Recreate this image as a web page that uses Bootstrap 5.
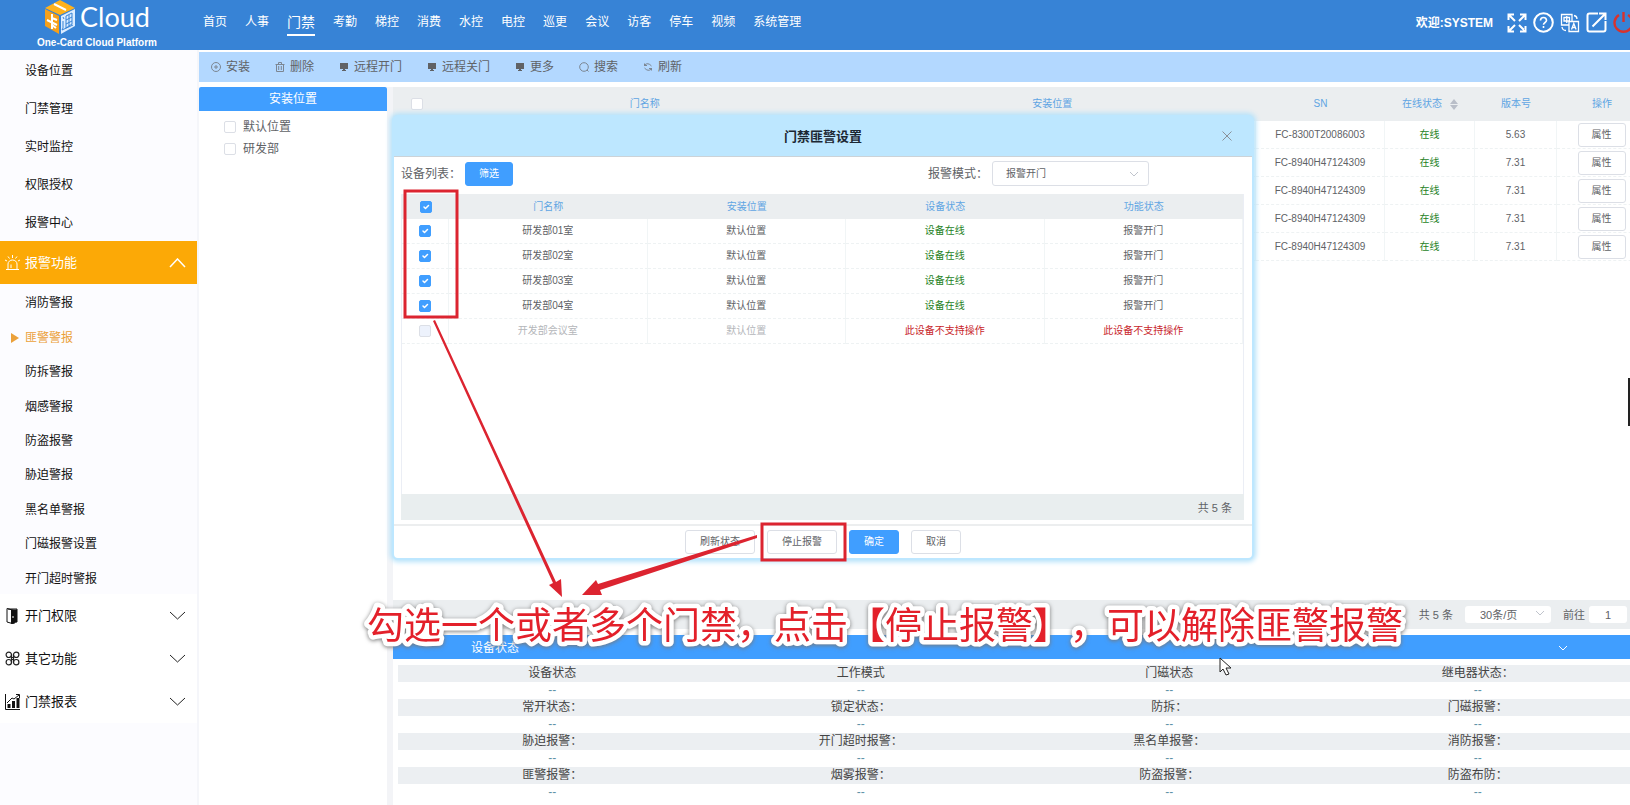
<!DOCTYPE html>
<html lang="zh-CN">
<head>
<meta charset="utf-8">
<meta name="viewport" content="width=device-width, initial-scale=1">
<title>One-Card Cloud Platform</title>
<link href="https://cdn.jsdelivr.net/npm/bootstrap@5.3.0/dist/css/bootstrap.min.css" rel="stylesheet">
<style>
  :root { --brand: #409eff; --ink: #606266; --band: #ebeef0; --line: #ebeef5; }
  body { font: 12px/16px "Liberation Sans", "Noto Sans CJK SC", sans-serif; color: var(--ink); background: #fff; overflow: hidden; }
  a { text-decoration: none; color: inherit; }
  svg { display: block; flex: none; }

  .topbar { height: 50px; background: #3783d6; color: #fff; overflow: hidden; }
  .brand { width: 194px; }
  .brand-word { font: 27px/34px Lato, sans-serif; }
  .brand-tag { font-size: 10px; line-height: 14px; font-weight: 700; }
  .topnav .nav-link { color: #fff; padding: 0 9px; line-height: 24px; }
  .topnav .active { font-size: 14px; }
  .topnav .active span { display: inline-block; border-bottom: 2px solid #fff; }
  .tools { gap: 6px; margin-right: -4px; }

  .sidebar { width: 199px; background: #fcfcff; border-right: 2px solid #f5f6fa; color: #111; }
  .side-link { display: flex; align-items: center; height: 38px; padding: 2px 0 0 25px; }
  .side-group { display: flex; align-items: center; height: 43px; width: 100%; border: 0; padding: 0 11px 0 5px; background: #fff; color: #111; font-size: 13px; text-align: left; }
  .side-group span { flex: 1; margin-left: 5px; }
  .side-group.open { background: #fca906; color: #fff; }
  .side-sub { display: grid; grid-auto-rows: 1fr; min-height: 310px; }
  .side-sub a { display: flex; align-items: center; padding: 4px 0 0 25px; }
  .side-sub a.current { color: #eba13a; padding-left: 11px; gap: 6px; }

  .toolbar { height: 30px; background: #b3d8ff; padding-left: 11px; gap: 24px; margin-top: 2px; }
  .toolbar button { border: 0; background: none; padding: 0; color: var(--ink); display: flex; align-items: center; gap: 4px; }

  .tree { width: 188px; }
  .tree h2 { height: 24px; line-height: 25px; font-size: 12px; font-weight: 400; margin: 0; background: var(--brand); color: #fff; text-align: center; border-radius: 2px 2px 0 0; }
  .tree label { display: flex; align-items: center; gap: 7px; height: 22px; padding-left: 25px; }
  .form-check-input[type=checkbox] { width: 12px; height: 12px; margin: 0; border: 1px solid #dcdfe6; border-radius: 2px; display: block; flex: none; }
  .form-check-input[type=checkbox]:checked { background-color: var(--brand); border-color: var(--brand); }
  .form-check-input[type=checkbox]:disabled { background-color: #edf2fc; opacity: 1; }
  .gutter { width: 6px; background: #f3f4f7; }

  .grid-table { table-layout: fixed; border-collapse: separate; border-spacing: 0; font-size: 10px; line-height: 14px; text-align: center; width: 100%; }
  .grid-table th { background: var(--band); color: #5fa5e3; font-weight: 400; padding: 0; }
  .grid-table td { padding: 0; border-right: 1px solid #f1f5f6; border-bottom: 1px dashed #eef2f3; }
  .grid-table .form-check-input[type=checkbox] { margin: 0 auto; }
  .grid-table .ok { color: #1d7f1d; }
  .grid-table .bad { color: #c8242a; }
  .grid-table .off { color: #b4b6ba; }
  .device-list { overflow: hidden; }
  .device-list .grid-table { width: calc(100% + 17px); }
  .device-list th { height: 34px; }
  .device-list td { height: 28px; padding-top: 1px; }
  .plain-btn, .solid-btn { height: 24px; font-size: 10px; line-height: 22px; padding: 0 13px; border-radius: 3px; border: 1px solid #dcdfe6; background: #fff; color: var(--ink); }
  .solid-btn { background: var(--brand); border-color: var(--brand); color: #fff; }

  .pick { appearance: none; border: 1px solid #dcdfe6; border-radius: 3px; color: var(--ink); background: #fff url("data:image/svg+xml,%3Csvg xmlns='http://www.w3.org/2000/svg' width='10' height='6'%3E%3Cpath d='M1 1l4 4 4-4' fill='none' stroke='%23c0c4cc'/%3E%3C/svg%3E") no-repeat right 9px center; }
  .pager { height: 29px; background: var(--band); font-size: 11px; padding-right: 3px; }
  .pager .pick { width: 86px; height: 17px; margin: 0 12px; border: 0; padding: 0 15px; font-size: 11px; background-position: right 6px top 4px; }
  .pager input { width: 38px; height: 17px; border: 0; border-radius: 3px; text-align: center; font-size: 11px; color: var(--ink); padding: 0; }
  .status-bar { height: 24px; background: var(--brand); color: #fff; margin-top: 6px; padding: 2px 62px 0 78px; }
  .status-table { table-layout: fixed; width: 100%; text-align: center; color: #444; line-height: 17px; }
  .status-table th { font-weight: 400; padding: 0; background: #eceff2; }
  .status-table td { padding: 0; color: #5f93a8; }
  .status-wrap { padding: 6px 0 4px 5px; margin-right: -2px; }

  .dialog-box { position: absolute; left: -1px; right: 376px; top: 28px; background: #fff; border: 2px solid #bde7ff; border-radius: 6px; box-shadow: 0 0 5px 2px #b5e2fa; }
  .dialog-head { height: 40px; background: #bde7ff; border-bottom: 1px solid #ccd3d8; position: relative; }
  .dialog-head h1 { font-size: 13px; line-height: 40px; font-weight: 700; margin: 0; color: #1c2733; text-align: center; }
  .dialog-head button { position: absolute; right: 20px; top: 14px; border: 0; background: none; padding: 0; }
  .dialog-body { padding: 4px 8px 4px 7px; }
  .dialog-body .pick { width: 157px; height: 25px; font-size: 10px; padding: 0 13px; }
  .mode { margin-right: 95px; }
  .zone-list { border: 1px solid var(--line); border-width: 0 1px; margin-top: 8px; min-height: 300px; }
  .zone-list th, .zone-list td { height: 25px; }
  .zone-foot { height: 26px; line-height: 28px; background: #e9eeef; text-align: right; font-size: 11px; padding-right: 12px; }
  .dialog-foot { border-top: 2px solid #eceeef; height: 34px; gap: 12px; }
  .dialog-foot .plain-btn, .dialog-foot .solid-btn { padding: 0 14px; }

  .notes { position: absolute; left: 0; top: 0; width: 100%; height: 100%; pointer-events: none; overflow: hidden; }
  .notes text { font: 37px "Noto Sans CJK SC", sans-serif; font-kerning: none; font-feature-settings: "chws" 0, "halt" 0; text-spacing-trim: space-all; fill: #e3202a; stroke: #fff; stroke-width: 9px; stroke-linejoin: round; paint-order: stroke; filter: drop-shadow(0 1px 2px #777); }
  .edge-handle { position: absolute; right: 0; top: 378px; width: 2px; height: 48px; background: #222; }
</style>
</head>
<body class="position-relative vh-100 d-flex flex-column">
<header class="topbar d-flex align-items-start">
  <a href="#" class="brand d-flex flex-column align-items-center">
    <span class="d-flex gap-1" style="height:36px">
      <svg width="32" height="34" viewBox="0 0 32 34"><path d="M1 8 16 0l15 8-15 7z" fill="#ffb21c"/><path d="M1 9l14 7v18L1 26z" fill="#f6a01a"/><path d="M17 16l14-7v17l-14 8z" fill="#dcecff"/><g fill="none" stroke="#fff" stroke-width="2"><path d="M10 4l12 6M8 14v15M8 18l5 2M3 20l10 5M8 25l4 3"/></g><g fill="none" stroke="#3783d6" stroke-width="1"><path d="M22 16l6-3v11l-6 4zM22 20l6-3M22 24l6-3M25 15v11M19 17l1 2M19 21v7l-1 2 11-5"/></g></svg>
      <span class="brand-word">Cloud</span>
    </span>
    <span class="brand-tag">One-Card Cloud Platform</span>
  </a>
  <nav class="nav topnav flex-nowrap flex-fill" style="padding-top:10px">
    <a class="nav-link" href="#">首页</a><a class="nav-link" href="#">人事</a><a class="nav-link active" href="#"><span>门禁</span></a><a class="nav-link" href="#">考勤</a><a class="nav-link" href="#">梯控</a><a class="nav-link" href="#">消费</a><a class="nav-link" href="#">水控</a><a class="nav-link" href="#">电控</a><a class="nav-link" href="#">巡更</a><a class="nav-link" href="#">会议</a><a class="nav-link" href="#">访客</a><a class="nav-link" href="#">停车</a><a class="nav-link" href="#">视频</a><a class="nav-link" href="#">系统管理</a>
  </nav>
  <div class="tools d-flex align-items-center" style="padding-top:12px">
    <b class="me-2">欢迎:SYSTEM</b>
    <svg width="20" height="20" viewBox="0 0 20 20" fill="none" stroke="#fff" stroke-width="2"><path d="M7 1.500H1.500V7M1.500 1.500 8 8M13 1.500h5.500V7M18.500 1.500 12 8M7 18.500H1.500V13M1.500 18.500 8 12M13 18.500h5.500V13M18.500 18.500 12 12"/></svg>
    <svg width="21" height="21" viewBox="0 0 21 21" fill="none" stroke="#fff" stroke-width="2"><circle cx="10.500" cy="10.500" r="9.300"/><path d="M7.500 8.500c0-4 6-4 6 0 0 2-3 2-3 4.300M10.500 14v2" stroke-width="1.600"/></svg>
    <svg width="20" height="20" viewBox="0 0 20 20" fill="none" stroke="#fff" stroke-width="1.300"><path d="M9 12H1.500V1.500H12V8M9 8.500h9.500v10H9zM4 4.500h5.500v3.500H4zM6.750 3v7M11.500 16.500l2.300-6 2.300 6M12.300 14.500h3M14 2.500q3 .5 3 3.500M2 14q.5 3.500 4 3.500"/></svg>
    <svg width="21" height="21" viewBox="0 0 21 21" fill="none" stroke="#fff" stroke-width="2"><path d="M12 1.500H3.500q-2 0-2 2v14q0 2 2 2h14q2 0 2-2V9M6.500 14.500l13-13M13 1.500h6.500V8"/></svg>
    <svg width="21" height="21" viewBox="0 0 21 21" fill="none" stroke="#d8322c" stroke-width="2.400"><path d="M6 3a9 9 0 1 0 9 0M10.500 0v10"/></svg>
  </div>
</header>

<div class="d-flex flex-fill" style="min-height:0">
  <aside class="sidebar flex-shrink-0">
    <nav style="padding-top:1px">
      <a class="side-link" href="#">设备位置</a>
      <a class="side-link" href="#">门禁管理</a>
      <a class="side-link" href="#">实时监控</a>
      <a class="side-link" href="#">权限授权</a>
      <a class="side-link" href="#">报警中心</a>
      <button class="side-group open"><svg width="15" height="16" viewBox="0 0 15 16" fill="none" stroke="#fff"><path d="M1 14.500h13M3 14V9a4.500 4 0 0 1 9 0v5M6 13V9.500M7.500 0v3M3 1.500l1.500 2M12 1.500l-1.500 2M0 5l2 1M15 5l-2 1"/></svg><span>报警功能</span><svg width="17" height="10" viewBox="0 0 17 10" fill="none" stroke="#fff" stroke-width="1.500"><path d="M1 9l7.500-8L16 9"/></svg></button>
      <div class="side-sub">
        <a href="#">消防警报</a>
        <a href="#" class="current"><svg width="8" height="10"><path d="M0 0l8 5-8 5z" fill="#eba13a"/></svg>匪警警报</a>
        <a href="#">防拆警报</a>
        <a href="#">烟感警报</a>
        <a href="#">防盗报警</a>
        <a href="#">胁迫警报</a>
        <a href="#">黑名单警报</a>
        <a href="#">门磁报警设置</a>
        <a href="#">开门超时警报</a>
      </div>
      <button class="side-group"><svg width="15" height="16" viewBox="0 0 15 16"><path d="M3 1h9v13H9" fill="none" stroke="#111"/><path d="M2 .5l7 2V16l-7-2z" fill="none" stroke="#111"/><path d="M6 1.500h6V14l-6 2z" fill="#111"/><path d="M8 8v2" stroke="#fff"/></svg><span>开门权限</span><svg width="17" height="10" viewBox="0 0 17 10" fill="none" stroke="#222"><path d="M1 1l7.500 7L16 1"/></svg></button>
      <button class="side-group"><svg width="15" height="15" viewBox="0 0 15 15" fill="none" stroke="#222" stroke-width="1.200"><circle cx="3.800" cy="3.800" r="2.700"/><circle cx="11.200" cy="3.800" r="2.700"/><circle cx="3.800" cy="11.200" r="2.700"/><circle cx="11.200" cy="11.200" r="2.700"/><path d="M6.500 3.500v8M8.500 3.500v8M6.500 6.500h2M6.500 8.500h2"/></svg><span>其它功能</span><svg width="17" height="10" viewBox="0 0 17 10" fill="none" stroke="#222"><path d="M1 1l7.500 7L16 1"/></svg></button>
      <button class="side-group"><svg width="15" height="16" viewBox="0 0 15 16" fill="none" stroke="#111"><path d="M.5 0v15.500H15M2 9l5-5 2 1 5-4M11 .5h3.500V4"/><path d="M4 10v4M8.500 7v7M13 4v10" stroke-width="3"/></svg><span>门禁报表</span><svg width="17" height="10" viewBox="0 0 17 10" fill="none" stroke="#222"><path d="M1 1l7.500 7L16 1"/></svg></button>
    </nav>
  </aside>

  <main class="flex-fill d-flex flex-column" style="min-width:0">
    <div class="toolbar d-flex flex-shrink-0">
      <button><svg width="12" height="12" viewBox="0 0 12 12" fill="none" stroke="#7c8692"><circle cx="6" cy="6" r="4.500"/><path d="M4 6h4M6 4v4"/></svg>安装</button>
      <button><svg width="12" height="12" viewBox="0 0 12 12" fill="none" stroke="#7c8692"><path d="M1.500 3.500h9M4.500 3V1.500h3V3M2.500 3.500v7h7v-7M4.700 5v4M7.300 5v4"/></svg>删除</button>
      <button><svg width="12" height="12" viewBox="0 0 12 12" fill="#606266"><path d="M2 2h8v6H2zM5 8h2v1h1v1H4V9h1z"/></svg>远程开门</button>
      <button><svg width="12" height="12" viewBox="0 0 12 12" fill="#606266"><path d="M2 2h8v6H2zM5 8h2v1h1v1H4V9h1z"/></svg>远程关门</button>
      <button><svg width="12" height="12" viewBox="0 0 12 12" fill="#606266"><path d="M2 2h8v6H2zM5 8h2v1h1v1H4V9h1z"/></svg>更多</button>
      <button><svg width="12" height="12" viewBox="0 0 12 12" fill="none" stroke="#7c8692"><circle cx="6" cy="6" r="4.300"/><path d="M9 9l1.500 1.500"/></svg>搜索</button>
      <button><svg width="12" height="12" viewBox="0 0 12 12" fill="none" stroke="#7c8692"><path d="M2.500 5V2.500M2.500 4.500H5M2.500 4Q6 1 9.500 5M9.500 7v2.500M9.500 7.500H7M9.500 8Q6 11 2.500 7"/></svg>刷新</button>
    </div>
    <div class="d-flex flex-fill" style="min-height:0;padding-top:5px">
      <section class="tree flex-shrink-0">
        <h2>安装位置</h2>
        <div style="padding-top:5px">
          <label><input type="checkbox" class="form-check-input">默认位置</label>
          <label><input type="checkbox" class="form-check-input">研发部</label>
        </div>
      </section>
      <div class="gutter flex-shrink-0"></div>
      <section class="flex-fill position-relative d-flex flex-column" style="min-width:0">
        <div class="device-list flex-fill">
          <table class="grid-table">
            <colgroup><col style="width:48px"><col><col><col style="width:129px"><col style="width:90px"><col style="width:82px"><col style="width:90px"></colgroup>
            <thead><tr><th><input type="checkbox" class="form-check-input" aria-label="全选"></th><th>门名称</th><th>安装位置</th><th>SN</th><th><span class="d-inline-flex align-items-center gap-2">在线状态<svg width="8" height="11"><path d="M4 0l4 5H0zM4 11l4-5H0z" fill="#b9bec8"/></svg></span></th><th>版本号</th><th>操作</th></tr></thead>
            <tbody>
              <tr><td></td><td></td><td></td><td>FC-8300T20086003</td><td class="ok">在线</td><td>5.63</td><td><button class="plain-btn">属性</button></td></tr>
              <tr><td></td><td></td><td></td><td>FC-8940H47124309</td><td class="ok">在线</td><td>7.31</td><td><button class="plain-btn">属性</button></td></tr>
              <tr><td></td><td></td><td></td><td>FC-8940H47124309</td><td class="ok">在线</td><td>7.31</td><td><button class="plain-btn">属性</button></td></tr>
              <tr><td></td><td></td><td></td><td>FC-8940H47124309</td><td class="ok">在线</td><td>7.31</td><td><button class="plain-btn">属性</button></td></tr>
              <tr><td></td><td></td><td></td><td>FC-8940H47124309</td><td class="ok">在线</td><td>7.31</td><td><button class="plain-btn">属性</button></td></tr>
            </tbody>
          </table>
        </div>
        <div class="pager d-flex align-items-center justify-content-end flex-shrink-0">
          <span>共 5 条</span>
          <select class="pick" aria-label="每页条数"><option>30条/页</option></select>
          <label for="goto" class="me-1">前往</label><input id="goto" value="1">
        </div>
        <div class="status-bar d-flex align-items-center justify-content-between flex-shrink-0"><span>设备状态</span><svg width="10" height="7" viewBox="0 0 10 7" fill="none" stroke="#fff"><path d="M1 1l4 4 4-4"/></svg></div>
        <div class="status-wrap">
          <table class="status-table">
            <tr><th>设备状态</th><th>工作模式</th><th>门磁状态</th><th>继电器状态：</th></tr>
            <tr><td>--</td><td>--</td><td>--</td><td>--</td></tr>
            <tr><th>常开状态：</th><th>锁定状态：</th><th>防拆：</th><th>门磁报警：</th></tr>
            <tr><td>--</td><td>--</td><td>--</td><td>--</td></tr>
            <tr><th>胁迫报警：</th><th>开门超时报警：</th><th>黑名单报警：</th><th>消防报警：</th></tr>
            <tr><td>--</td><td>--</td><td>--</td><td>--</td></tr>
            <tr><th>匪警报警：</th><th>烟雾报警：</th><th>防盗报警：</th><th>防盗布防：</th></tr>
            <tr><td>--</td><td>--</td><td>--</td><td>--</td></tr>
          </table>
        </div>

        <div class="dialog-box" role="dialog" aria-labelledby="dlg-title">
          <div class="dialog-head"><h1 id="dlg-title">门禁匪警设置</h1><button aria-label="关闭"><svg width="10" height="10" stroke="#8a9199"><path d="M.5.500l9 9M9.500.500l-9 9"/></svg></button></div>
          <div class="dialog-body">
            <div class="d-flex align-items-center justify-content-between">
              <div class="d-flex align-items-center gap-1"><span>设备列表：</span><button class="solid-btn">筛选</button></div>
              <div class="mode d-flex align-items-center gap-1"><label for="mode">报警模式：</label><select id="mode" class="pick"><option>报警开门</option></select></div>
            </div>
            <div class="zone-list">
              <table class="grid-table">
                <colgroup><col style="width:47px"><col><col><col><col></colgroup>
                <thead><tr><th><input type="checkbox" class="form-check-input" checked aria-label="全选"></th><th>门名称</th><th>安装位置</th><th>设备状态</th><th>功能状态</th></tr></thead>
                <tbody>
                  <tr><td><input type="checkbox" class="form-check-input" checked aria-label="研发部01室"></td><td>研发部01室</td><td>默认位置</td><td class="ok">设备在线</td><td>报警开门</td></tr>
                  <tr><td><input type="checkbox" class="form-check-input" checked aria-label="研发部02室"></td><td>研发部02室</td><td>默认位置</td><td class="ok">设备在线</td><td>报警开门</td></tr>
                  <tr><td><input type="checkbox" class="form-check-input" checked aria-label="研发部03室"></td><td>研发部03室</td><td>默认位置</td><td class="ok">设备在线</td><td>报警开门</td></tr>
                  <tr><td><input type="checkbox" class="form-check-input" checked aria-label="研发部04室"></td><td>研发部04室</td><td>默认位置</td><td class="ok">设备在线</td><td>报警开门</td></tr>
                  <tr><td><input type="checkbox" class="form-check-input" disabled aria-label="开发部会议室"></td><td class="off">开发部会议室</td><td class="off">默认位置</td><td class="bad">此设备不支持操作</td><td class="bad">此设备不支持操作</td></tr>
                </tbody>
              </table>
            </div>
            <div class="zone-foot">共 5 条</div>
          </div>
          <div class="dialog-foot d-flex align-items-center justify-content-center">
            <button class="plain-btn">刷新状态</button><button class="plain-btn">停止报警</button><button class="solid-btn">确定</button><button class="plain-btn">取消</button>
          </div>
        </div>
      </section>
    </div>
  </main>
</div>

<svg class="notes">
  <g fill="none" stroke="#dc2430" stroke-width="3"><rect x="405" y="191" width="52" height="126"/><rect x="762" y="524" width="83" height="36"/></g>
  <g fill="#dc2430"><path d="M435 320l121 262 5-3 1 18-13-12 4-2L433 321z"/><path d="M757 535L598 584l-2-4-14 15 20 0-2-5L757 538z"/></g>
  <text x="367" y="639">勾选一个或者多个门禁，点击【停止报警】，可以解除匪警报警</text>
  <path d="M1220 658v14l3-3 3 6 3-1-3-6h5z" fill="#fff" stroke="#222"/>
</svg>
<div class="edge-handle"></div>
<script src="https://cdn.jsdelivr.net/npm/bootstrap@5.3.0/dist/js/bootstrap.bundle.min.js"></script>
</body>
</html>
